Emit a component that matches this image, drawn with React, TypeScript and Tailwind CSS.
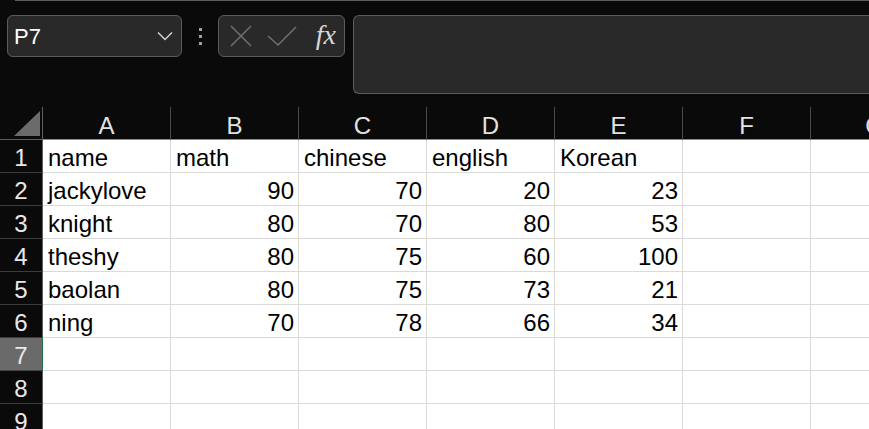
const cols = ["A", "B", "C", "D", "E", "F", "G"];

const data: (string | number)[][] = [
  ["name", "math", "chinese", "english", "Korean"],
  ["jackylove", 90, 70, 20, 23],
  ["knight", 80, 70, 80, 53],
  ["theshy", 80, 75, 60, 100],
  ["baolan", 80, 75, 73, 21],
  ["ning", 70, 78, 66, 34],
  [],
  [],
  [],
];

function Cell({ value }: { value?: string | number }) {
  const isNum = typeof value === "number";
  return (
    <div
      className={`w-[128px] shrink-0 h-[33px] border-r border-b border-[#dadada] bg-white text-black text-[24px] leading-[32px] pt-[2px] overflow-hidden whitespace-nowrap ${
        isNum ? "text-right pr-[4px]" : "text-left pl-[5px]"
      }`}
    >
      {value ?? ""}
    </div>
  );
}

export default function App() {
  return (
    <div className="w-[869px] h-[429px] overflow-hidden bg-[#0a0a0a] font-['Liberation_Sans',Arial,sans-serif]">
      <div className="ml-[15px] h-px bg-[#5e5e5e]" />

      {/* toolbar */}
      <div className="flex items-start mt-[14px] pl-[7px]">
        <div className="w-[175px] h-[42px] shrink-0 rounded-[6px] border border-[#5c5c5c] bg-[#292929] flex items-center justify-between pl-[6px] pr-[8px]">
          <span className="text-white text-[22px]">P7</span>
          <svg width="16" height="10" viewBox="0 0 16 10" fill="none">
            <path d="M1 1.5 L8 8.5 L15 1.5" stroke="#d0d0d0" strokeWidth="1.5" />
          </svg>
        </div>
        <div className="w-[36px] h-[42px] shrink-0 flex flex-col items-center justify-center gap-[4px]">
          <div className="w-[3px] h-[3px] bg-[#a0a0a0]" />
          <div className="w-[3px] h-[3px] bg-[#a0a0a0]" />
          <div className="w-[3px] h-[3px] bg-[#a0a0a0]" />
        </div>
        <div className="w-[127px] h-[42px] shrink-0 rounded-[6px] border border-[#5c5c5c] bg-[#292929] flex items-center pl-[10px] pr-[8px]">
          <svg width="24" height="22" viewBox="0 0 24 22" fill="none">
            <path d="M2 1 L22 21 M22 1 L2 21" stroke="#6e6e6e" strokeWidth="1.6" />
          </svg>
          <svg width="32" height="22" viewBox="0 0 32 22" fill="none" className="ml-[14px]">
            <path d="M1 11 L11 20 L29 2" stroke="#6e6e6e" strokeWidth="1.6" />
          </svg>
          <span className="ml-auto text-[#d8d8d8] text-[28px] italic font-['Liberation_Serif',serif] leading-none -mt-[2px]">
            fx
          </span>
        </div>
        <div className="ml-[8px] flex-1 h-[79px] rounded-l-[6px] border border-r-0 border-[#5c5c5c] bg-[#292929]" />
      </div>

      {/* grid */}
      <div className="mt-[13px]">
        <div className="flex h-[33px]">
          <div className="w-[43px] shrink-0 border-r border-b border-[#5e5e5e] flex items-end justify-end pr-[2px] pb-[3px]">
            <svg width="26" height="25" viewBox="0 0 26 25">
              <path d="M0 25 L26 25 L26 0 Z" fill="#6b6b6b" />
            </svg>
          </div>
          {cols.map((c) => (
            <div
              key={c}
              className="w-[128px] shrink-0 border-r border-b border-r-[#4a4a4a] border-b-[#8a8a8a] text-center text-[#e2e2e2] text-[24px] leading-[32px] pt-[3px]"
            >
              {c}
            </div>
          ))}
        </div>
        {data.map((row, i) => (
          <div key={i} className="flex h-[33px]">
            <div
              className={`w-[43px] shrink-0 border-r border-b text-center text-[24px] leading-[32px] pt-[2px] text-[#e8e8e8] ${
                i === 6
                  ? "bg-[#6a6a6a] border-r-[#217346] border-b-[#444]"
                  : "border-r-[#5e5e5e] border-b-[#3c3c3c]"
              }`}
            >
              {i + 1}
            </div>
            {cols.map((c, j) => (
              <Cell key={c} value={row[j]} />
            ))}
          </div>
        ))}
      </div>
    </div>
  );
}
